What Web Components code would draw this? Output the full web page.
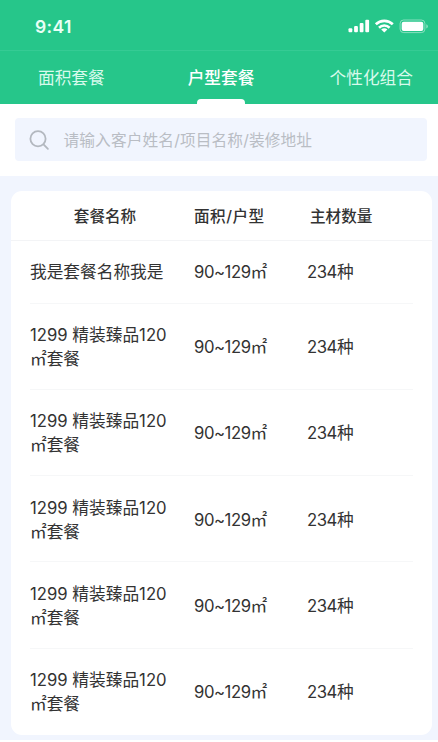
<!DOCTYPE html>
<html lang="zh-CN">
<head>
<meta charset="UTF-8">
<meta name="viewport" content="width=device-width, initial-scale=1">
<title>户型套餐</title>
<style>
    body {
        margin: 0;
        background-color: #ffffff;
        font-family: Inter, "Noto Sans CJK SC", sans-serif;
        color: #333;
    }
</style>
</head>
<body>
<package-page></package-page>

<script>
class StatusBar extends HTMLElement {
    constructor() {
        super();
        this.attachShadow({ mode: "open" });
        this.shadowRoot.innerHTML = `
            <style>
                :host {
                    display: flex;
                    justify-content: space-between;
                    align-items: center;
                    box-sizing: border-box;
                    height: 51px;
                    padding: 3px 9px 0 35px;
                    color: #e9fff6;
                    border-bottom: 1px solid #35cb94;
                }
                .time {
                    font-size: 17.5px;
                    font-weight: 600;
                    line-height: 20px;
                    letter-spacing: 0.4px;
                }
                svg {
                    display: block;
                }
            </style>
            <span class="time"><slot></slot></span>
            <svg width="82" height="16" viewBox="0 0 82 16" fill="#fff">
                <rect x="1.5" y="9.2" width="3.8" height="4" rx="1"/>
                <rect x="7.1" y="7" width="3.8" height="6.2" rx="1"/>
                <rect x="12.7" y="4" width="3.8" height="9.2" rx="1"/>
                <rect x="18.3" y="0.8" width="3.8" height="12.4" rx="1"/>
                <g fill="none" stroke="#fff" stroke-width="2.6">
                    <path d="M28.8 5.3a12.2 12.2 0 0 1 17 0"/>
                    <path d="M32 8.7a7.6 7.6 0 0 1 10.6 0"/>
                </g>
                <path d="M34.2 10.6a4.6 4.6 0 0 1 6.2 0L37.3 13.6z"/>
                <rect x="53.1" y="1" width="24.8" height="12.6" rx="3.5" fill="none" stroke="#fff" stroke-opacity=".45"/>
                <rect x="54.7" y="2.7" width="21.6" height="9.2" rx="2"/>
                <path d="M79.3 5.3v4.2q1.5-.6 1.5-2.1t-1.5-2.1z" fill-opacity=".5"/>
            </svg>
        `;
    }
}

class TabItem extends HTMLElement {
    constructor() {
        super();
        this.attachShadow({ mode: "open" });
        this.shadowRoot.innerHTML = `
            <style>
                :host {
                    display: flex;
                    flex-direction: column;
                    align-items: center;
                    justify-content: space-between;
                    height: 53px;
                    font-size: 16.7px;
                    line-height: 24px;
                    color: #d8faec;
                    white-space: nowrap;
                }
                .label {
                    margin-top: 15px;
                }
                .bar {
                    width: 48px;
                    height: 5px;
                    border-radius: 4px 4px 0 0;
                }
                :host([active]) {
                    color: #fff;
                    font-weight: 500;
                }
                :host([active]) .bar {
                    background-color: #fff;
                }
            </style>
            <span class="label"><slot></slot></span>
            <span class="bar"></span>
        `;
    }
}

class SearchBox extends HTMLElement {
    constructor() {
        super();
        this.attachShadow({ mode: "open" });
        this.shadowRoot.innerHTML = `
            <style>
                :host {
                    display: flex;
                    align-items: center;
                    box-sizing: border-box;
                    height: 43px;
                    padding-left: 14px;
                    border-radius: 4px;
                    background-color: #f1f5fe;
                    color: #b9bdc4;
                    font-size: 15.7px;
                    line-height: 24px;
                }
                svg {
                    margin: 1px 13.5px 0 0;
                }
                span {
                    margin-top: 2px;
                    letter-spacing: 0.12px;
                }
            </style>
            <svg width="21" height="21" viewBox="0 0 21 21" fill="none" stroke="#b3b8bf" stroke-width="1.8" stroke-linecap="round">
                <circle cx="9" cy="8.8" r="7.6"/>
                <path d="M14.5 14.4l4.4 4.5"/>
            </svg>
            <span><slot></slot></span>
        `;
    }
}

class PackageRow extends HTMLElement {
    constructor() {
        super();
        this.attachShadow({ mode: "open" });
        this.shadowRoot.innerHTML = `
            <style>
                :host {
                    display: grid;
                    grid-template-columns: 164px 113px 1fr;
                    align-items: center;
                    box-sizing: border-box;
                    height: 86.3px;
                    padding-top: 1.6px;
                    margin: 0 19px;
                    border-bottom: 1px solid #f6f7f8;
                    font-size: 16.7px;
                    line-height: 24px;
                }
                :host([short]) {
                    height: 63px;
                }
                :host(:last-child) {
                    padding-top: 0;
                    border-bottom: 0;
                }
                .name {
                    width: 146px;
                }
                .num {
                    letter-spacing: -0.45px;
                }
            </style>
            <div class="name"><slot></slot></div>
            <div class="num area"></div>
            <div class="num count"></div>
        `;
    }

    connectedCallback() {
        this.shadowRoot.querySelector(".area").textContent = this.getAttribute("area");
        this.shadowRoot.querySelector(".count").textContent = this.getAttribute("count");
    }
}

class PackageTable extends HTMLElement {
    constructor() {
        super();
        this.attachShadow({ mode: "open" });
        this.shadowRoot.innerHTML = `
            <style>
                :host {
                    display: block;
                    border-radius: 11px;
                    background-color: #fff;
                }
                .head {
                    display: grid;
                    grid-template-columns: 164px 113px 1fr;
                    align-items: center;
                    box-sizing: border-box;
                    height: 50px;
                    padding: 3px 19px 0;
                    border-bottom: 1px solid #f3f4f6;
                    font-size: 15.6px;
                    font-weight: 500;
                    line-height: 24px;
                }
                .name {
                    width: 150px;
                    text-align: center;
                }
                .area {
                    letter-spacing: 0.5px;
                }
                .count {
                    padding-left: 3px;
                }
            </style>
            <div class="head">
                <span class="name">套餐名称</span>
                <span class="area">面积/户型</span>
                <span class="count">主材数量</span>
            </div>
            <slot></slot>
        `;
    }
}

class PackagePage extends HTMLElement {
    constructor() {
        super();
        this.attachShadow({ mode: "open" });
        const row = `<package-row area="90~129㎡" count="234种">1299 精装臻品120<br>㎡套餐</package-row>`;
        this.shadowRoot.innerHTML = `
            <style>
                :host {
                    display: block;
                    height: 742px;
                    overflow: hidden;
                }
                header {
                    background-color: #26c68a;
                }
                nav {
                    display: grid;
                    grid-template-columns: 1fr auto 1fr;
                    padding: 0 25px 0 29px;
                }
                nav tab-item:first-child {
                    justify-self: start;
                    margin-left: 9px;
                }
                nav tab-item:last-child {
                    justify-self: end;
                }
                .search {
                    box-sizing: border-box;
                    height: 72px;
                    padding: 14px 11px 0 15px;
                    background-color: #fff;
                }
                main {
                    box-sizing: border-box;
                    height: 564px;
                    padding: 14.5px 6px 0 11px;
                    background-color: #f1f5fe;
                }
            </style>
            <header>
                <status-bar>9:41</status-bar>
                <nav>
                    <tab-item>面积套餐</tab-item>
                    <tab-item active>户型套餐</tab-item>
                    <tab-item>个性化组合</tab-item>
                </nav>
            </header>
            <div class="search">
                <search-box>请输入客户姓名/项目名称/装修地址</search-box>
            </div>
            <main>
                <package-table>
                    <package-row short area="90~129㎡" count="234种">我是套餐名称我是</package-row>
                    ${row.repeat(5)}
                </package-table>
            </main>
        `;
    }
}

customElements.define("status-bar", StatusBar);
customElements.define("tab-item", TabItem);
customElements.define("search-box", SearchBox);
customElements.define("package-row", PackageRow);
customElements.define("package-table", PackageTable);
customElements.define("package-page", PackagePage);
</script>
</body>
</html>
